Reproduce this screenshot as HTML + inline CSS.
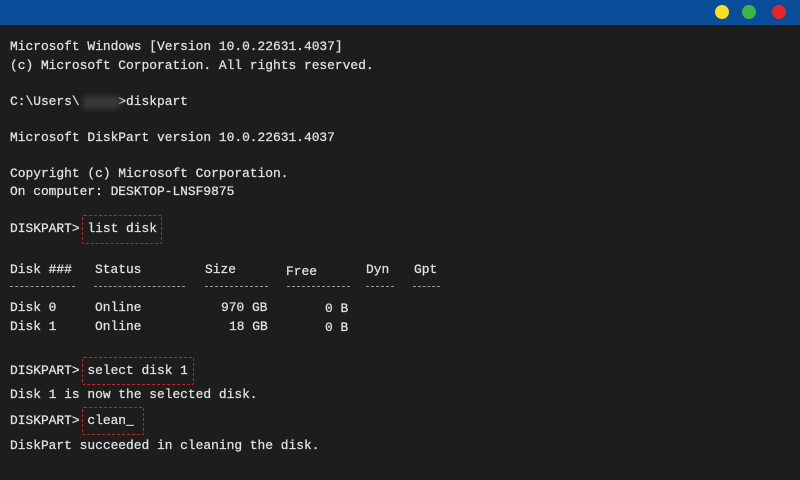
<!DOCTYPE html>
<html><head><style>
body{margin:0;width:800px;height:480px;background:#1d1d1d;overflow:hidden;position:relative;font-family:"Liberation Mono",monospace;font-size:12.9px;color:#e2e2e2}
.bar{position:absolute;left:0;top:0;width:800px;height:25px;background:#0a4d98}
.dot{position:absolute;top:5px;width:14px;height:14px;border-radius:50%}
.l{position:absolute;white-space:pre;line-height:16px;-webkit-text-stroke:0.25px #e2e2e2}
.box{position:absolute;border:1.5px dashed #c4252b;border-radius:2px}
.blur{position:absolute;left:83px;top:96px;width:37px;height:13px;background:#3a3a3a;filter:blur(3px)}
.d{position:absolute;top:286px;height:0;border-top:1.5px dashed #9a9a9a}
</style></head><body>
<div class="bar"></div>
<div class="dot" style="left:715px;background:#f7e02a"></div>
<div class="dot" style="left:742px;background:#3db44a"></div>
<div class="dot" style="left:772px;background:#e8232a"></div>
<div class="l" style="left:10px;top:39px">Microsoft Windows [Version 10.0.22631.4037]</div>
<div class="l" style="left:10px;top:58px">(c) Microsoft Corporation. All rights reserved.</div>
<div class="l" style="left:10px;top:94px">C:\Users\     &gt;diskpart</div>
<div class="blur"></div>
<div class="l" style="left:10px;top:130px">Microsoft DiskPart version 10.0.22631.4037</div>
<div class="l" style="left:10px;top:166px">Copyright (c) Microsoft Corporation.</div>
<div class="l" style="left:10px;top:184px">On computer: DESKTOP-LNSF9875</div>
<div class="l" style="left:10px;top:221px">DISKPART&gt; list disk</div>
<div class="box" style="left:82px;top:215px;width:78px;height:27px"></div>
<div class="l" style="left:10px;top:262px">Disk ###</div>
<div class="l" style="left:95px;top:262px">Status</div>
<div class="l" style="left:205px;top:262px">Size</div>
<div class="l" style="left:286px;top:264px">Free</div>
<div class="l" style="left:366px;top:262px">Dyn</div>
<div class="l" style="left:414px;top:262px">Gpt</div>
<div class="d" style="left:10px;width:65px"></div>
<div class="d" style="left:94px;width:91px"></div>
<div class="d" style="left:205px;width:63px"></div>
<div class="d" style="left:287px;width:63px"></div>
<div class="d" style="left:366px;width:28px"></div>
<div class="d" style="left:413px;width:27px"></div>
<div class="l" style="left:10px;top:300px">Disk 0</div>
<div class="l" style="left:95px;top:300px">Online</div>
<div class="l" style="left:221px;top:300px">970 GB</div>
<div class="l" style="left:325px;top:301px">0 B</div>
<div class="l" style="left:10px;top:319px">Disk 1</div>
<div class="l" style="left:95px;top:319px">Online</div>
<div class="l" style="left:229px;top:319px">18 GB</div>
<div class="l" style="left:325px;top:320px">0 B</div>
<div class="l" style="left:10px;top:363px">DISKPART&gt; select disk 1</div>
<div class="box" style="left:82px;top:357px;width:110px;height:26px"></div>
<div class="l" style="left:10px;top:387px">Disk 1 is now the selected disk.</div>
<div class="l" style="left:10px;top:413px">DISKPART&gt; clean_</div>
<div class="box" style="left:82px;top:407px;width:60px;height:26px"></div>
<div class="l" style="left:10px;top:438px">DiskPart succeeded in cleaning the disk.</div>
</body></html>
